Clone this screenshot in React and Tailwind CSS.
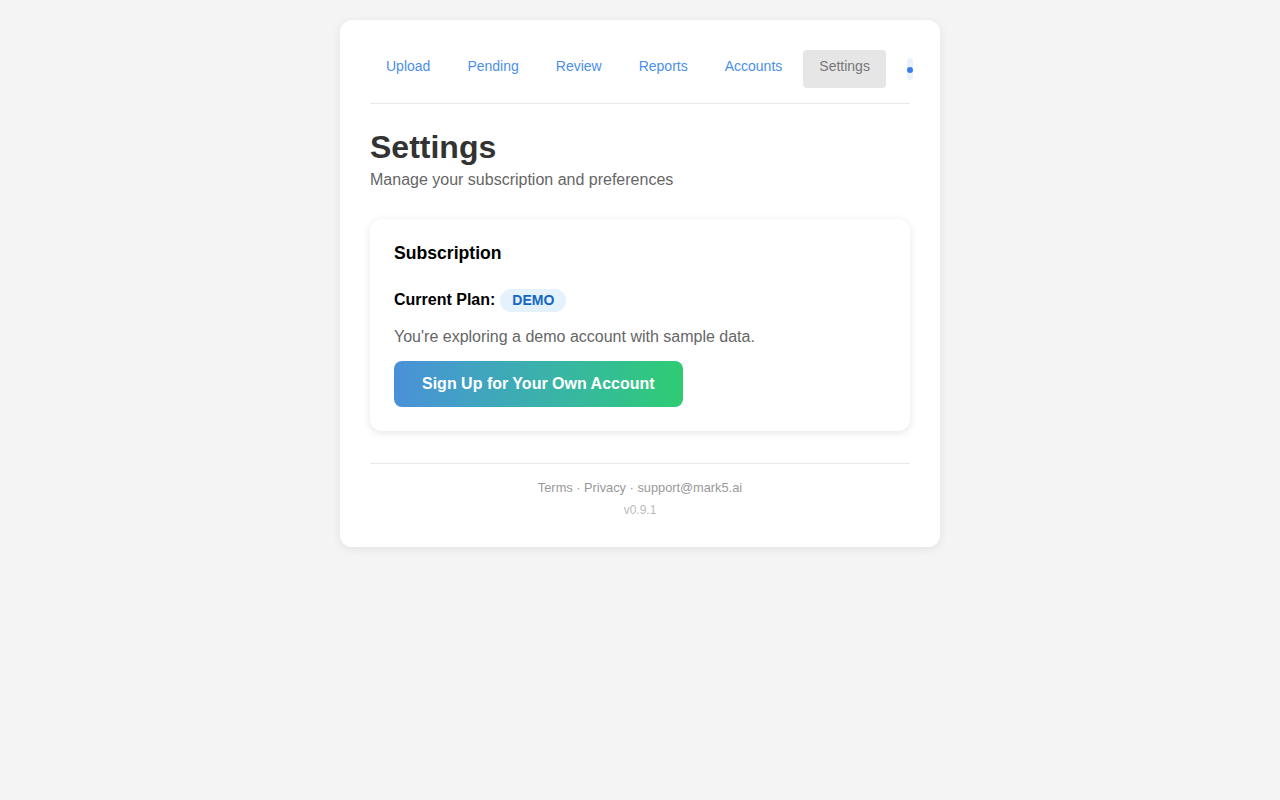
const tabs = ['Upload', 'Pending', 'Review', 'Reports', 'Accounts', 'Settings']

export default function App() {
  return (
    <div className="min-h-[800px] bg-[#f4f4f4] pt-5 font-['Liberation_Sans',Arial,sans-serif]">
      <div className="mx-auto w-[600px] rounded-xl bg-white px-[30px] pt-[30px] pb-[28px] shadow-[0_2px_10px_rgba(0,0,0,0.08)]">
        {/* nav */}
        <nav className="flex items-center gap-[5px] border-b border-[#eaeaea] pb-[15px]">
          {tabs.map((t) => (
            <span
              key={t}
              className={
                t === 'Settings'
                  ? 'h-[38px] rounded bg-[#e6e6e6] px-4 pt-[6px] text-[14px] leading-5 text-[#777]'
                  : 'h-[38px] rounded px-4 pt-[6px] text-[14px] leading-5 text-[#4a8fea]'
              }
            >
              {t}
            </span>
          ))}
          <span className="ml-4 flex h-[22px] w-2 items-center justify-center rounded-full bg-[#eaf2fe]">
            <span className="mt-[2px] h-[6px] w-[6px] rounded-full bg-[#3b7cf0]" />
          </span>
        </nav>

        <h1 className="mt-6 text-[32px] leading-[38px] font-bold text-[#333]">Settings</h1>
        <p className="mt-[2px] text-[16px] leading-6 text-[#666]">Manage your subscription and preferences</p>

        {/* subscription card */}
        <div className="mt-[27px] rounded-xl bg-white p-6 shadow-[0_2px_8px_rgba(0,0,0,0.1)]">
          <h2 className="text-[17.6px] leading-[20px] font-bold text-black">Subscription</h2>
          <div className="mt-[25px] flex h-6 items-center gap-[5px]">
            <span className="text-[16px] font-bold text-black">Current Plan:</span>
            <span className="flex h-[23px] items-center rounded-full bg-[#e3f2fd] px-3 text-[14px] font-bold text-[#1565c0]">
              DEMO
            </span>
          </div>
          <p className="mt-[13px] text-[16px] leading-6 text-[#666]">You're exploring a demo account with sample data.</p>
          <button className="mt-[12px] h-[46px] rounded-lg bg-gradient-to-r from-[#4a90d9] to-[#2ecc71] px-7 text-[16px] font-bold text-white">
            Sign Up for Your Own Account
          </button>
        </div>

        {/* footer */}
        <div className="mt-8 border-t border-[#eaeaea] pt-[14px] text-center">
          <p className="text-[12.8px] leading-5 text-[#999]">Terms · Privacy · support@mark5.ai</p>
          <p className="mt-[3px] text-[12px] leading-[18px] text-[#bbb]">v0.9.1</p>
        </div>
      </div>
    </div>
  )
}
